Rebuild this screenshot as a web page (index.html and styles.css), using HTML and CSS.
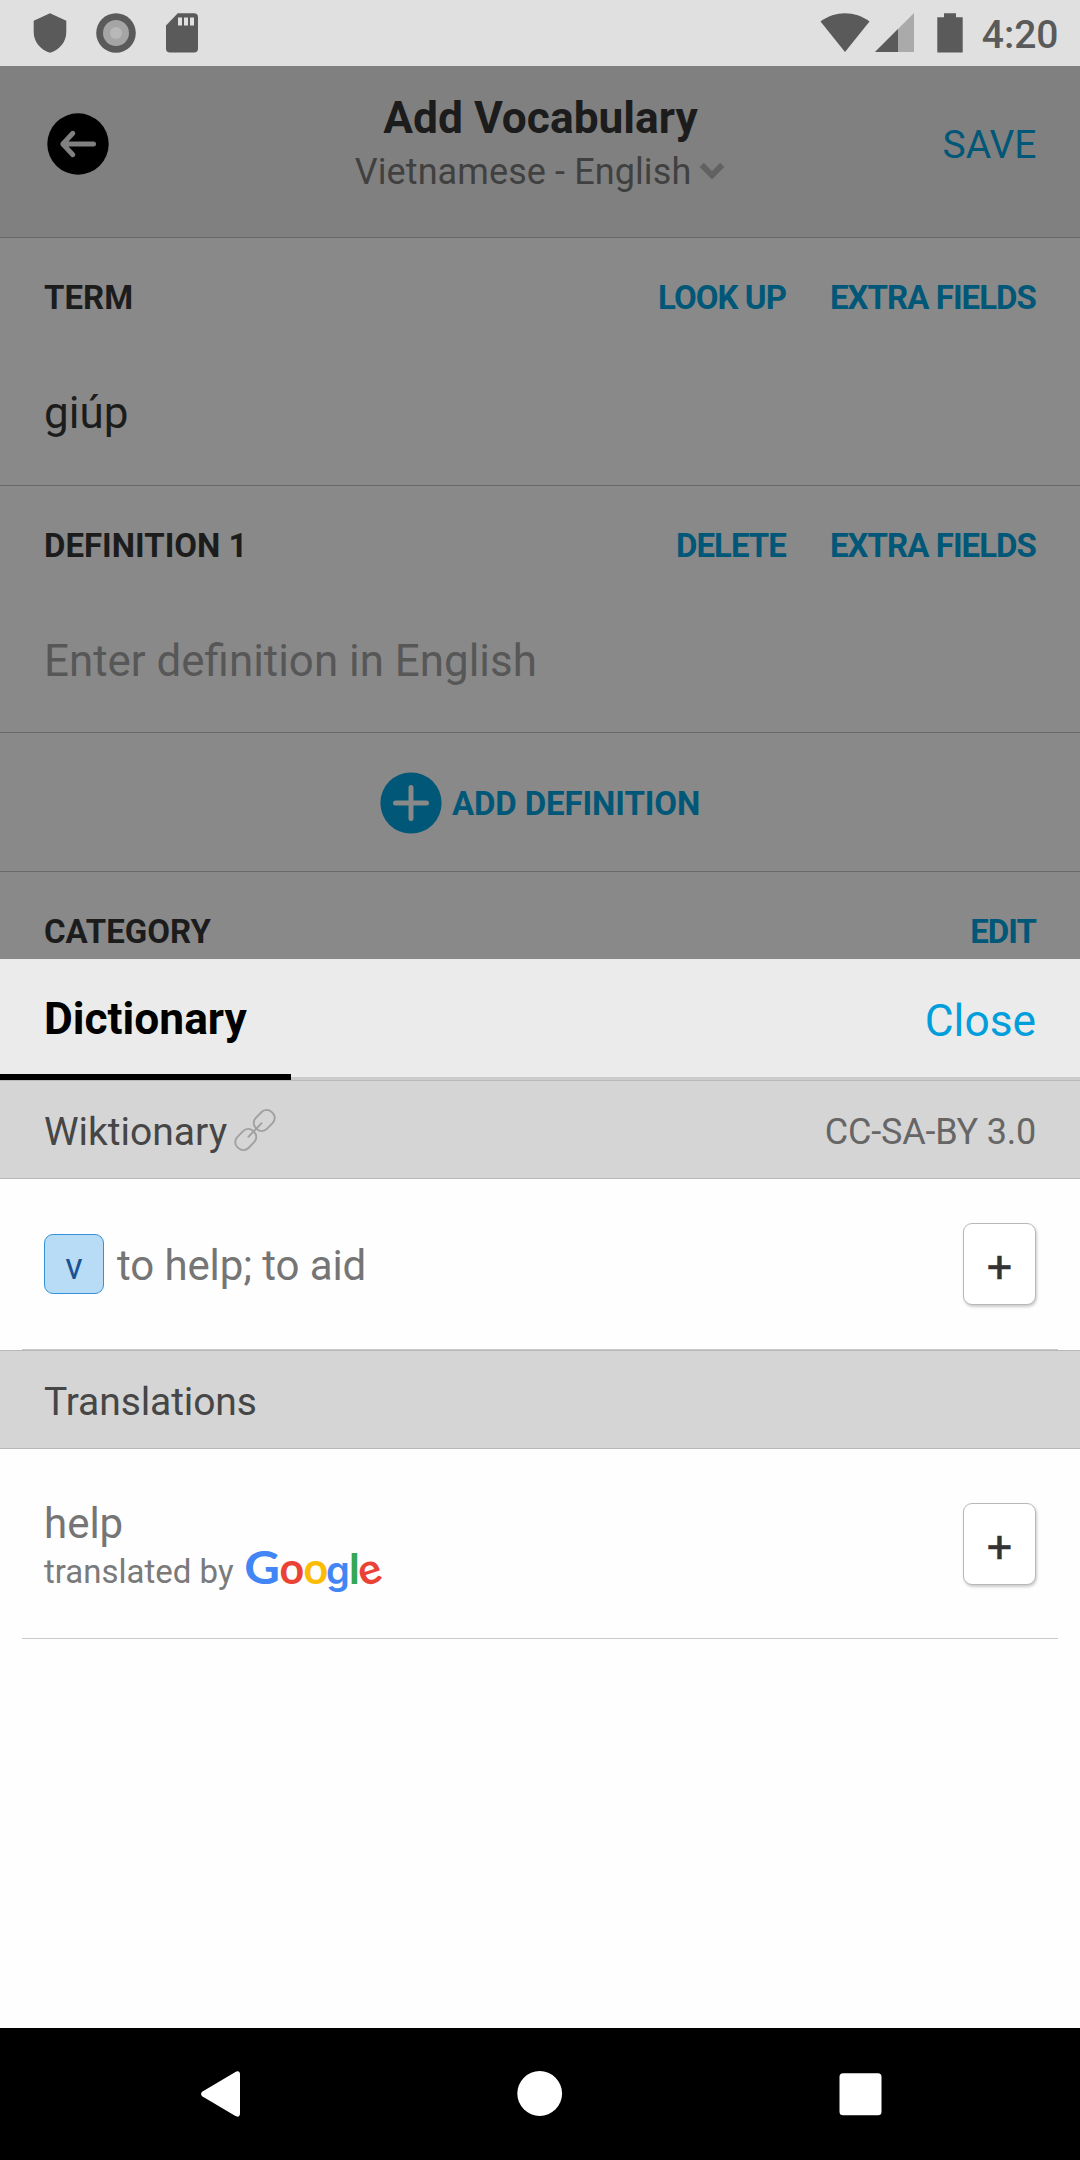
FILE: index.html
```html
<!DOCTYPE html>
<html lang="en">
<head>
<meta charset="utf-8">
<title>Add Vocabulary</title>
<link rel="stylesheet" href="styles.css">
</head>
<body>
<div class="phone">
  <header class="status-bar">
    <div class="status-left">
      <svg width="34" height="40" viewBox="0 0 34 40"><path fill="#5a5a5a" d="M17 .3 33.3 7.8V19C33.3 29 26.500 36.800 17 39.700 7.500 36.800.7 29 .7 19V7.800z"/></svg>
      <svg width="40" height="40" viewBox="0 0 40 40"><circle cx="20" cy="20" r="19.800" fill="#5a5a5a"/><circle cx="20" cy="20" r="13" fill="#a5a5a5"/><circle cx="20" cy="20" r="6" fill="#b8b8b8"/></svg>
      <svg class="card" width="32" height="40" viewBox="0 0 32 40"><path fill="#5a5a5a" d="M11.800.3H28a4 4 0 0 1 4 4V35.500a4 4 0 0 1-4 4H4a4 4 0 0 1-4-4V12.500z"/><path fill="#e0e0e0" d="M12 4.500h4v8h-4zM18 4.500h4v8h-4zM24 4.500h4v8h-4z"/></svg>
    </div>
    <div class="status-right">
      <svg width="50" height="40" viewBox="0 0 50 40"><path fill="#5a5a5a" d="M25 39 .5 8.500C15-2.500 35-2.500 49.500 8.500z"/></svg>
      <svg class="signal" width="39" height="40" viewBox="0 0 39 40"><path fill="#aaa" d="M39 0V39H0z"/><path fill="#5a5a5a" d="M23 16V39H0z"/></svg>
      <svg class="battery" width="26" height="40" viewBox="0 0 26 40"><path fill="#5a5a5a" d="M7 .3H19V4.300H25.700V39.600H.3V4.300H7z"/></svg>
      <span class="clock">4:20</span>
    </div>
  </header>

  <main class="form">
    <div class="app-bar">
      <svg class="back" width="62" height="62" viewBox="0 0 62 62"><circle cx="31" cy="31" r="30.700" fill="#000"/><path d="M46.500 31H17M25.800 20.300 15.800 31 25.800 41.700" fill="none" stroke="#808080" stroke-width="5" stroke-linecap="round" stroke-linejoin="round"/></svg>
      <div class="heading">
        <h1 class="title">Add Vocabulary</h1>
        <div class="languages">
          <span>Vietnamese - English</span>
          <svg width="26" height="18" viewBox="0 0 26 18"><path d="M2.700 2.800 13 13.300 23.300 2.800" fill="none" stroke="#626262" stroke-width="6"/></svg>
        </div>
      </div>
      <span class="save">SAVE</span>
    </div>

    <section class="field">
      <div class="field-head"><h2 class="label">TERM</h2><div class="actions"><span>LOOK UP</span><span>EXTRA FIELDS</span></div></div>
      <div class="value">giúp</div>
    </section>
    <section class="field definition">
      <div class="field-head"><h2 class="label">DEFINITION 1</h2><div class="actions"><span>DELETE</span><span>EXTRA FIELDS</span></div></div>
      <div class="value placeholder">Enter definition in English</div>
    </section>
    <div class="add-definition">
      <svg width="62" height="62" viewBox="0 0 62 62"><circle cx="31" cy="31" r="30.600" fill="#005777"/><path d="M31 15.500V46.500M15.500 31H46.500" stroke="#898989" stroke-width="5" stroke-linecap="round"/></svg>
      <span>ADD DEFINITION</span>
    </div>
    <section class="field category">
      <div class="field-head"><h2 class="label">CATEGORY</h2><div class="actions"><span>EDIT</span></div></div>
    </section>
  </main>

  <section class="sheet">
    <div class="sheet-head">
      <div class="tab">Dictionary</div>
      <div class="close">Close</div>
    </div>
    <div class="source">
      <span>Wiktionary</span>
      <svg class="link" width="44" height="44" viewBox="0 0 44 44"><g fill="none" stroke="#a0a0a0" stroke-width="1.900" stroke-linecap="round" transform="rotate(-46 22 22)"><rect x="-2.500" y="14.200" width="22.500" height="15.600" rx="7"/><rect x="24" y="14.200" width="22.500" height="15.600" rx="7"/><path d="M12.500 22H31.500"/></g></svg>
      <span class="license">CC-SA-BY 3.0</span>
    </div>
    <div class="entry">
      <span class="pos">v</span>
      <span class="meaning">to help; to aid</span>
      <span class="plus">+</span>
    </div>
    <div class="source"><span class="translations">Translations</span></div>
    <div class="entry last">
      <div class="result">
        <div class="meaning">help</div>
        <div class="credit">
          <span>translated by</span>
          <svg class="google" width="140" height="48" viewBox="0 0 140 48"><text class="cap" x="0" y="36" fill="#4285f4" transform="translate(17) scale(1.070 1)">G</text><text x="46.900" y="36" fill="#ea4335">o</text><text x="70.900" y="36" fill="#fbbc05">o</text><text class="geo" x="93" y="36" fill="#4285f4">g</text><text class="geo tall" x="109.500" y="36" fill="#34a853">l</text><text x="125" y="36" fill="#ea4335" transform="rotate(-18 125 25)">e</text></svg>
        </div>
      </div>
      <span class="plus">+</span>
    </div>
  </section>

  <nav class="nav-bar">
    <svg width="46" height="46" viewBox="0 0 46 46"><path fill="#fff" d="M1.500 20.500 34 1.200C37-.5 39 .5 39 3.500V42.500C39 45.500 37 46.500 34 44.800L1.500 25.500Q-1.500 23 1.500 20.500z"/></svg>
    <svg width="46" height="46" viewBox="0 0 46 46"><circle cx="19.700" cy="22.500" r="22.400" fill="#fff"/></svg>
    <svg width="46" height="46" viewBox="0 0 46 46"><rect x="1.500" y="2.300" width="42" height="42" rx="3.500" fill="#fff"/></svg>
  </nav>
</div>
</body>
</html>
```
FILE: styles.css
```css
* { box-sizing: border-box; }
body { margin: 0; font-family: Roboto, sans-serif; background: #fefefe; }
svg { display: block; flex: none; overflow: visible; }
h1, h2 { margin: 0; font-weight: 700; }
.phone { width: 1080px; height: 2160px; display: flex; flex-direction: column; overflow: hidden; }

.status-bar { height: 66px; flex: none; display: flex; justify-content: space-between; background: #e0e0e0; padding: 13px 22px 0 33px; }
.status-left, .status-right { display: flex; align-items: flex-start; }
.status-left { gap: 29px; }
.card { margin-left: 1px; }
.signal { margin-left: 5px; }
.battery { margin-left: 23px; }
.clock { margin-left: 18.500px; margin-right: -0.500px; font-size: 39px; font-weight: 500; line-height: 46px; color: #5a5a5a; margin-top: -1px; }

.form { height: 893px; flex: none; overflow: hidden; background: #898989; color: #1c1c1c; }
.app-bar { height: 172px; display: grid; grid-template-columns: 200px 1fr 200px; align-items: start; background: #808080; border-bottom: 1px solid #666; padding: 0 44px; }
.back { margin: 46.500px 0 0 2.500px; }
.heading { display: flex; flex-direction: column; align-items: center; padding-top: 26px; }
.title { padding-left: 1px; font-size: 44.300px; line-height: 53px; }
.languages { display: flex; align-items: center; gap: 8px; margin-top: 6px; font-size: 36px; line-height: 42px; letter-spacing: 0.100px; color: #404040; }
.languages svg { margin-top: -2px; }
.save { margin: 56px -0.500px 0 0; text-align: right; font-size: 39px; line-height: 46px; color: #005777; }

.field { height: 248px; padding: 40px 44px 0; border-bottom: 1px solid #686868; }
.definition { height: 247px; }
.category { height: 88px; border: 0; }
.field-head { display: flex; justify-content: space-between; line-height: 40px; }
.label { font-size: 33px; }
.actions { display: flex; gap: 44px; font-size: 33px; font-weight: 700; letter-spacing: -0.950px; color: #005777; }
.value { margin-top: 69px; font-size: 44px; line-height: 52px; }
.placeholder { color: #575757; font-size: 43.900px; }
.add-definition { height: 139px; display: flex; align-items: center; justify-content: center; gap: 10px; padding: 1px 0 0; border-bottom: 1px solid #686868; font-size: 33px; font-weight: 700; line-height: 40px; color: #005777; }
.add-definition span { padding-top: 2px; letter-spacing: -0.100px; }

.sheet { flex: 1; background: #fefefe; }
.sheet-head { height: 121px; display: flex; justify-content: space-between; background: #ebebeb; box-shadow: inset 0 -3px #cbcbcb; font-size: 44.300px; line-height: 52px; }
.tab { width: 291px; padding: 34px 0 0 44px; border-bottom: 6px solid #000; font-weight: 700; color: #000; }
.close { padding: 36px 44px 0 0; color: #009fdc; }
.source { height: 99px; display: flex; align-items: center; padding: 0 44px; border: solid #b8b8b8; border-width: 1px 0; background: #d5d5d5; font-size: 39px; line-height: 46px; color: #464646; }
.source span { padding-top: 4px; }
.translations { letter-spacing: -0.100px; }
.link { margin-left: 6px; }
.license { margin-left: auto; font-size: 36px; letter-spacing: -0.200px; color: #666; }
.entry { height: 171px; display: flex; align-items: center; margin: 0 22px; padding: 0 22px; border-bottom: 1px solid #c9c9c9; }
.last { height: 190px; }
.pos { width: 60px; height: 60px; border: 1px solid #3492d8; border-radius: 9px; background: #b9dcf6; color: #1b5293; font-size: 36px; line-height: 65px; text-align: center; }
.meaning { font-size: 42px; line-height: 50px; color: #757575; }
.entry > .meaning { margin-left: 13px; padding-top: 4px; letter-spacing: -0.100px; }
.plus { width: 73px; height: 82px; margin-left: auto; border: 1px solid #b8b8b8; border-radius: 9px; background: #fff; box-shadow: 1px 2px 3px rgba(0, 0, 0, .2); color: #333; font-size: 45px; font-weight: 400; -webkit-text-stroke: 0.300px #333; line-height: 85px; text-align: center; }
.result { padding-top: 4px; }
.result .meaning { margin-bottom: 3px; }
.credit { display: flex; align-items: center; height: 40px; font-size: 33px; line-height: 40px; color: #7a7a7a; }
.google { margin-left: 11px; font-family: Lato, sans-serif; font-size: 43px; font-weight: 700; text-anchor: middle; }
.google .cap { font-size: 46px; }
.google .geo { font-family: Inter, sans-serif; font-size: 38px; font-weight: 600; }
.google .tall { font-size: 43px; }

.nav-bar { height: 132px; flex: none; display: grid; grid-template-columns: 46px 46px 46px; justify-content: space-between; background: #000; padding: 43px 196px 0 201px; }
```
